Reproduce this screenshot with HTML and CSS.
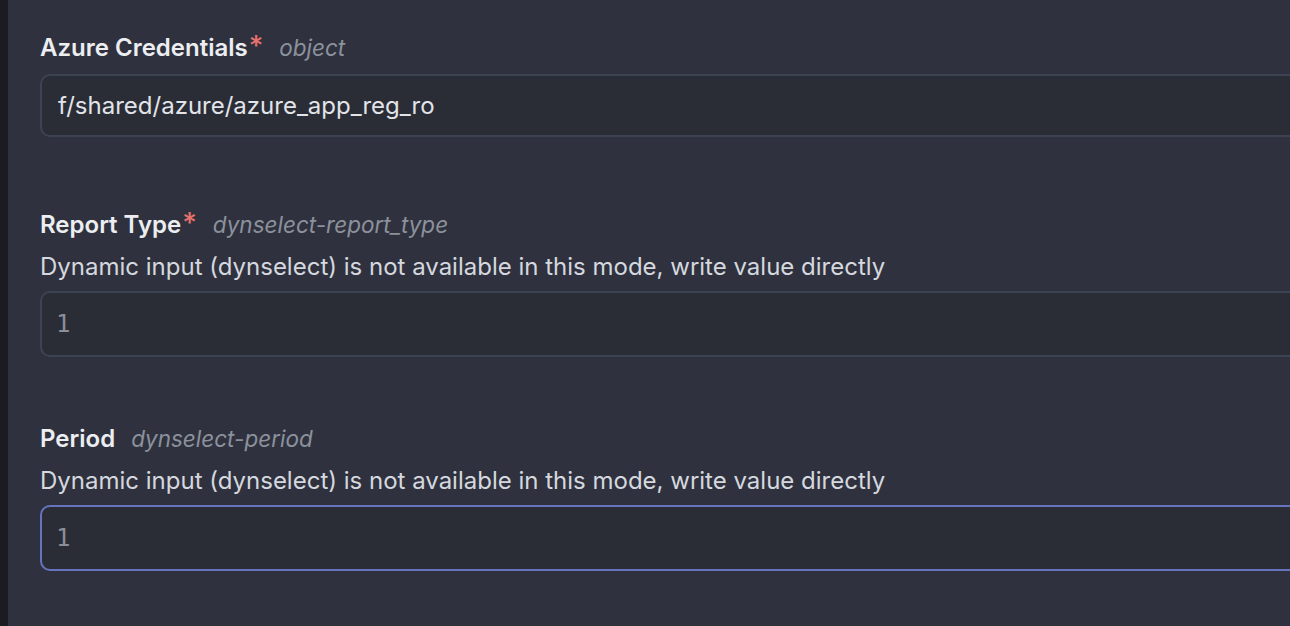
FILE: index.html
```html
<!DOCTYPE html>
<html>
<head>
<meta charset="utf-8">
<link rel="stylesheet" href="styles.css">
</head>
<body>
<div class="page">
  <div class="rail"></div>
  <main class="form">
    <section class="field">
      <div class="label-row">
        <span class="label">Azure Credentials</span><span class="req">*</span>
        <span class="type">object</span>
      </div>
      <div class="input input-cred">f/shared/azure/azure_app_reg_ro</div>
    </section>
    <section class="field field-second">
      <div class="label-row">
        <span class="label">Report Type</span><span class="req">*</span>
        <span class="type">dynselect-report_type</span>
      </div>
      <div class="desc">Dynamic input (dynselect) is not available in this mode, write value directly</div>
      <div class="input input-code">1</div>
    </section>
    <section class="field field-third">
      <div class="label-row">
        <span class="label">Period</span>
        <span class="type">dynselect-period</span>
      </div>
      <div class="desc">Dynamic input (dynselect) is not available in this mode, write value directly</div>
      <div class="input input-code input-focus">1</div>
    </section>
  </main>
</div>
</body>
</html>
```
FILE: styles.css
```css
* { box-sizing: border-box; }
html, body {
  margin: 0;
  padding: 0;
  height: 100%;
  background: #2f323e;
  overflow: hidden;
}
.page {
  display: flex;
  height: 626px;
  font-family: Inter, "Liberation Sans", sans-serif;
}
.rail {
  width: 8px;
  flex: none;
  background: #1a1c22;
}
.form {
  flex: 1;
  padding: 32px 0 0 32px;
  margin-right: -40px;
  display: flex;
  flex-direction: column;
}
.field { display: flex; flex-direction: column; }
.field-second { margin-top: 72px; }
.field-third { margin-top: 66px; }
.label-row {
  display: flex;
  align-items: baseline;
  height: 32px;
  line-height: 32px;
  white-space: nowrap;
}
.label {
  font-size: 24px;
  font-weight: 600;
  color: #eceef2;
}
.req {
  color: #e8716b;
  font-size: 28px;
  font-weight: 500;
  align-self: flex-start;
  line-height: 28px;
  margin-top: 0;
  margin-left: 1px;
}
.type {
  margin-left: 16px;
  font-size: 22.5px;
  font-style: italic;
  color: #8c919c;
}
.desc {
  font-size: 24px;
  color: #d5d8df;
  line-height: 30px;
  margin-top: 11px;
  white-space: nowrap;
}
.input {
  margin-top: 10px;
  background: #2a2d36;
  border: 2px solid #3c4352;
  border-radius: 10px;
  font-size: 24px;
  color: #e2e4e9;
  padding-left: 16px;
  display: flex;
  align-items: center;
}
.input-cred { height: 63px; }
.input-code {
  height: 66px;
  margin-top: 9px;
  font-family: "DejaVu Sans Mono", "Liberation Mono", monospace;
  font-size: 24px;
  color: #8a8f9a;
  padding-left: 14px;
}
.input-focus { border-color: #6674bd; }
```
